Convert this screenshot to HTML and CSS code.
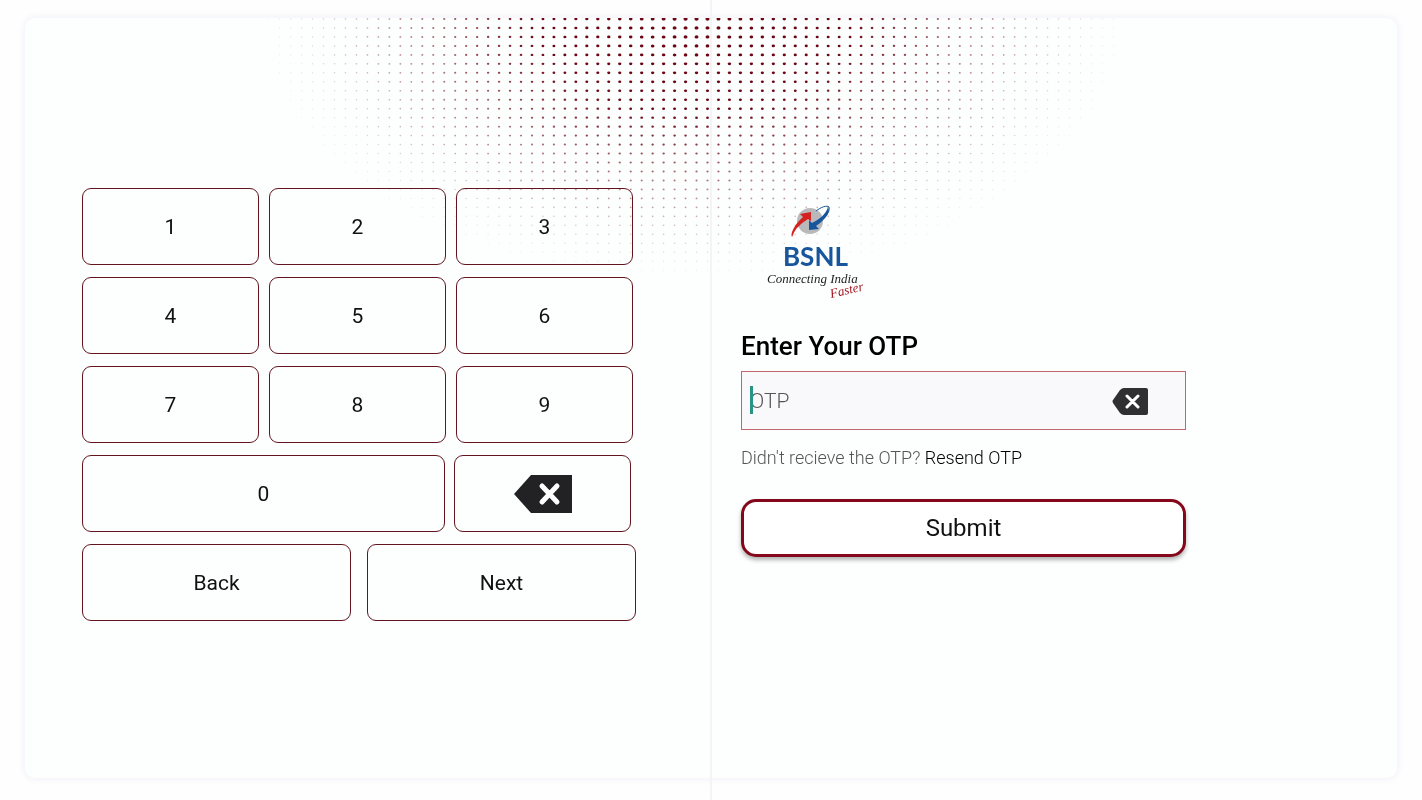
FILE: index.html
```html
<!doctype html>
<html lang="en">
<head>
	<meta charset="utf-8">
	<meta name="viewport" content="width=device-width, initial-scale=1.0">

	<title>BSNL - Enter OTP</title>

	<link rel="stylesheet" href="styles.css">
</head>
<body>
	<main class="card">
		<canvas id="dots" class="dots" aria-hidden="true"></canvas>

		<section class="panel panel-keys">
			<div class="keypad">
				<div class="key-row">
					<button class="key" type="button">1</button>
					<button class="key" type="button">2</button>
					<button class="key" type="button">3</button>
				</div>
				<div class="key-row">
					<button class="key" type="button">4</button>
					<button class="key" type="button">5</button>
					<button class="key" type="button">6</button>
				</div>
				<div class="key-row">
					<button class="key" type="button">7</button>
					<button class="key" type="button">8</button>
					<button class="key" type="button">9</button>
				</div>
				<div class="key-row key-row-zero">
					<button class="key key-zero" type="button">0</button>
					<button class="key key-delete" type="button" aria-label="Delete">
						<svg width="58" height="38" viewBox="0 0 58 38">
							<path d="M0 19L17 0H58V38H17Z" fill="#222224"></path>
							<path d="M28 11L43 27M43 11L28 27" stroke="#fff" stroke-width="5" stroke-linecap="round"></path>
						</svg>
					</button>
				</div>
				<div class="key-row key-row-nav">
					<button class="key key-nav" type="button">Back</button>
					<button class="key key-nav" type="button">Next</button>
				</div>
			</div>
		</section>

		<section class="panel panel-form">
			<svg class="logo" width="100" height="100" viewBox="0 0 100 100" role="img" aria-label="BSNL Connecting India Faster">
				<circle cx="45" cy="17" r="13" fill="#b9b9bb"></circle>
				<path d="M27 33C25 30 29 21 38 13L35 10L46 8V17L43 15C35 20 30 25 28 31Z" fill="#d3221f"></path>
				<path d="M63 3C66 8 61 15 51 22L54 25L44 26V16L47 19C55 15 61 10 63 3Z" fill="#17559c"></path>
				<path d="M51 7C56 3 62 1 64 3C65 6 63 10 59 14" fill="none" stroke="#17559c"></path>
				<text class="logo-name" x="18" y="62">BSNL</text>
				<text class="logo-tag" x="2" y="79">Connecting India</text>
				<text class="logo-faster" x="66" y="94" transform="rotate(-13 66 94)">Faster</text>
			</svg>

			<form class="otp-form">
				<label class="title" for="otp">Enter Your OTP</label>
				<div class="field">
					<input id="otp" class="otp-input" type="text" inputmode="numeric" placeholder="OTP">
					<span class="caret"></span>
					<button class="clear" type="button" aria-label="Clear">
						<svg width="36" height="27" viewBox="0 0 36 27">
							<path d="M1 12L8 2Q10 0 12 0H34Q36 0 36 2V25Q36 27 34 27H12Q10 27 8 25L1 15Q0 13 1 12Z" fill="#303033"></path>
							<path d="M15 8L26 19M26 8L15 19" stroke="#fff" stroke-width="3" stroke-linecap="round"></path>
						</svg>
					</button>
				</div>
				<p class="resend">Didn't recieve the OTP? <a href="#">Resend OTP</a></p>
				<button class="submit" type="button">Submit</button>
			</form>
		</section>
	</main>
	<div class="divider"></div>

	<script src="dots.js"></script>
</body>
</html>
```
FILE: styles.css
```css
* {
	box-sizing: border-box;
}

body {
	position: relative;
	min-height: 100vh;
	margin: 0;
	padding: 18px 25px 22px;
	background: #fefefe;
	font-family: Roboto, sans-serif;
	color: #111;
}

button,
input {
	font-family: inherit;
	color: inherit;
}

.card {
	position: relative;
	display: grid;
	grid-template-columns: 1fr 1fr;
	min-height: calc(100vh - 40px);
	border-radius: 10px;
	background: #fcfffe;
	box-shadow: 0 0 8px #eeeef8;
	overflow: hidden;
}

.dots {
	position: absolute;
	top: 0;
	left: 0;
	width: 100%;
	height: 100%;
}

.divider {
	position: absolute;
	top: 0;
	bottom: 0;
	left: 50%;
	width: 2px;
	margin-left: -1px;
	background: #f5f3f6;
}

.panel {
	position: relative;
}

.panel-keys {
	padding: 170px 40px 40px 57px;
}

.keypad {
	display: flex;
	flex-direction: column;
	gap: 12px;
	max-width: 554px;
}

.key-row {
	display: flex;
	gap: 10px;
}

.key-row-zero {
	gap: 9px;
}

.key-row-nav {
	gap: 16px;
}

.key {
	flex: 0 1 177px;
	height: 77px;
	padding: 0;
	border: 1px solid #62141f;
	border-radius: 9px;
	background: transparent;
	font-size: 21px;
}

.key-zero {
	flex-basis: 363px;
}

.key-delete {
	display: flex;
	align-items: center;
	justify-content: center;
}

.key-nav {
	flex-basis: 269px;
}

.panel-form {
	padding: 186px 40px 40px 30px;
}

.logo {
	display: block;
	margin-left: 24px;
}

.logo-name {
	font: bold 26px Lato, sans-serif;
	fill: #17559c;
}

.logo-tag,
.logo-faster {
	font: italic 13px "Liberation Serif", serif;
	fill: #222;
}

.logo-faster {
	fill: #a51622;
}

.otp-form {
	display: flex;
	flex-direction: column;
	max-width: 445px;
	margin-top: 26px;
}

.title {
	font-size: 26px;
	font-weight: 500;
	line-height: 32px;
	color: #000;
}

.field {
	position: relative;
	display: flex;
	align-items: center;
	height: 59px;
	margin-top: 9px;
	padding: 0 37px 0 8px;
	border: 1px solid #c0666c;
	background: rgba(248, 248, 252, 0.9);
}

.otp-input {
	flex: 1;
	min-width: 0;
	padding: 0;
	border: 0;
	outline: 0;
	background: transparent;
	font-size: 21px;
	font-weight: 300;
}

.otp-input::placeholder {
	color: #555;
	opacity: 1;
}

.caret {
	position: absolute;
	top: 14px;
	left: 8px;
	width: 3px;
	height: 28px;
	background: #2a9484;
}

.clear {
	display: flex;
	padding: 2px 0 0;
	border: 0;
	background: none;
}

.resend {
	margin: 16px 0 0;
	font-size: 18px;
	font-weight: 300;
	line-height: 24px;
	color: #555;
}

.resend a {
	color: #000;
	text-decoration: none;
}

.submit {
	height: 58px;
	margin-top: 29px;
	padding: 0;
	border: 3px solid #84071c;
	border-radius: 15px;
	background: #fff;
	box-shadow: 0 3px 4px rgba(0, 0, 0, 0.3);
	font-size: 24px;
}
```
FILE: dots.js
```js
var stepX = 10.97,
	stepY = 8.97;

// halftone fan at the top of the card, biggest dots in the middle
var drawDots = function drawDots() {
	var canvas = document.getElementById('dots'),
		ctx = canvas.getContext('2d'),
		centerX,
		x, y, dist, size, col, row;

	canvas.width = canvas.clientWidth;
	canvas.height = canvas.clientHeight;
	centerX = canvas.width / 2 - 3.5;
	ctx.fillStyle = '#6b0614';

	for (row = 0; row < 29; row++) {
		for (col = -42; col <= 42; col++) {
			x = centerX + col * stepX;
			y = 1 + row * stepY;
			dist = Math.hypot((x - centerX + 14) / 425, y / 260);

			if (dist > 1) {
				continue;
			}

			size = Math.pow(1 - dist, 1.4);
			ctx.globalAlpha = Math.min(1, 0.06 + Math.pow(1 - dist, 1.2) * 1.6);
			ctx.beginPath();
			ctx.ellipse(x, y, 0.7 + 1.4 * size, 0.7 + size, 0, 0, Math.PI * 2);
			ctx.fill();
		}
	}
};

window.addEventListener('resize', drawDots);
drawDots();
```
